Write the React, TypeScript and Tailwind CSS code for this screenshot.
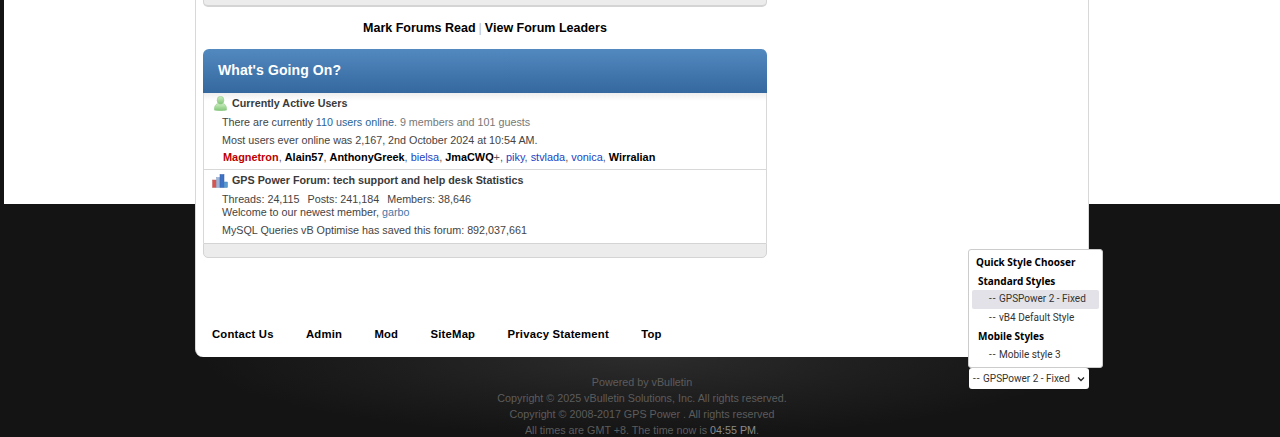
import React from "react";

const UserIcon = () => (
  <svg width="15" height="15" viewBox="0 0 16 16" className="shrink-0">
    <defs>
      <linearGradient id="ug" x1="0" y1="0" x2="0" y2="1">
        <stop offset="0" stopColor="#cdeec0" />
        <stop offset="1" stopColor="#7fc576" />
      </linearGradient>
    </defs>
    <ellipse cx="8" cy="4.5" rx="3.6" ry="4.2" fill="url(#ug)" stroke="#8fc888" strokeWidth="0.6" />
    <path d="M1.5 15 C1.2 10.5 3.5 8.3 5.5 8 C7 9 9 9 10.5 8 C12.5 8.3 14.8 10.5 14.5 15 C11 16 5 16 1.5 15Z" fill="url(#ug)" stroke="#8fc888" strokeWidth="0.6" />
  </svg>
);

const StatsIcon = () => (
  <svg width="16" height="14" viewBox="0 0 16 14" className="shrink-0">
    <rect x="0.5" y="6" width="4" height="7.5" fill="#d9534f" stroke="#b9605c" strokeWidth="0.5" />
    <rect x="4.5" y="3.5" width="3.5" height="10" fill="#9db4d8" stroke="#8aa0c4" strokeWidth="0.5" />
    <rect x="8" y="0.5" width="4" height="13" fill="#3f72c4" stroke="#335fa6" strokeWidth="0.5" />
    <rect x="12" y="8" width="3.5" height="5.5" fill="#5a9ad0" stroke="#4a84b6" strokeWidth="0.5" />
  </svg>
);

const Sep = () => <span className="text-[#555]">, </span>;
const B = ({ c }: { c: string }) => <span className="font-bold text-black">{c}</span>;
const L = ({ c }: { c: string }) => <span className="text-[#1c3fbf]">{c}</span>;
const Dash = () => <span className="tracking-[1px]">--</span>;

const footerLinks = ["Contact Us", "Admin", "Mod", "SiteMap", "Privacy Statement", "Top"];

export default function App() {
  return (
    <div className="relative h-[437px] w-[1280px] overflow-hidden bg-[#141414] font-['Liberation_Sans',Arial,sans-serif]">
      {/* page backdrop */}
      <div className="absolute left-[4px] right-0 top-0 h-[204px] bg-white" />
      <div className="absolute left-[200px] top-[357px] h-[80px] w-[884px] bg-[radial-gradient(ellipse_442px_80px_at_50%_0%,#2c2c2c_0%,#1e1e1e_55%,#141414_100%)]" />

      {/* content column */}
      <div className="relative ml-[195px] flex h-[357px] w-[894px] flex-col rounded-b-[8px] border-x border-[#d8d8d8] bg-white px-[7px]">
        {/* previous block's bottom */}
        <div className="h-[7px] w-[564px] rounded-b-[5px] border-x border-b-2 border-[#d4d4d4] bg-[#ececec]" />

        <div className="mt-[13px] flex h-[16px] w-[564px] items-center justify-center text-[12.5px] font-bold leading-[16px] text-black">
          <span>Mark Forums Read</span>
          <span className="mx-[3px] font-normal text-[#bbb]">|</span>
          <span>View Forum Leaders</span>
        </div>

        {/* What's going on */}
        <div className="mt-[13px] w-[564px]">
          <div className="flex h-[44px] items-center rounded-t-[6px] bg-[linear-gradient(#5289bf,#34689f)] pb-[2px] pl-[15px] text-[14px] font-bold tracking-[0.1px] text-white">
            What's Going On?
          </div>
          <div className="border-x border-[#d8d8d8] text-[10.75px] text-[#444]">
            <div className="h-[77px] border-b border-[#d8d8d8] bg-[linear-gradient(#eeeeee,#ffffff_8px)]">
              <div className="flex h-[18px] items-end gap-[4px] pl-[9px]">
                <UserIcon />
                <span className="text-[10.75px] font-bold leading-[15px] text-[#3a3a3a]">Currently Active Users</span>
              </div>
              <div className="mt-[4px] h-[14px] pl-[18px] leading-[14px]">
                There are currently <span className="text-[#2a6496]">110 users online</span>
                <span className="text-[#777]">. 9 members and 101 guests</span>
              </div>
              <div className="mt-[4px] h-[14px] pl-[18px] leading-[14px]">
                Most users ever online was 2,167, 2nd October 2024 at 10:54 AM.
              </div>
              <div className="mt-[3px] h-[14px] pl-[19px] text-[10.9px] leading-[14px]">
                <span className="font-bold text-[#c00000]">Magnetron</span>
                <Sep />
                <B c="Alain57" />
                <Sep />
                <B c="AnthonyGreek" />
                <Sep />
                <L c="bielsa" />
                <Sep />
                <B c="JmaCWQ" />
                <span className="text-[#555]">+</span>
                <Sep />
                <L c="piky" />
                <Sep />
                <L c="stvlada" />
                <Sep />
                <L c="vonica" />
                <Sep />
                <B c="Wirralian" />
              </div>
            </div>
            <div className="h-[73px]">
              <div className="flex h-[18px] items-end gap-[4px] pl-[8px]">
                <StatsIcon />
                <span className="text-[10.75px] font-bold leading-[15px] text-[#3a3a3a]">
                  GPS Power Forum: tech support and help desk Statistics
                </span>
              </div>
              <div className="mt-[4px] flex h-[14px] gap-[8px] pl-[18px] leading-[14px]">
                <span>Threads: 24,115</span>
                <span>Posts: 241,184</span>
                <span>Members: 38,646</span>
              </div>
              <div className="h-[13px] pl-[18px] leading-[13px]">
                Welcome to our newest member, <span className="text-[#3f79a8]">garbo</span>
              </div>
              <div className="mt-[4px] h-[14px] pl-[18px] leading-[14px]">
                MySQL Queries vB Optimise has saved this forum: 892,037,661
              </div>
            </div>
          </div>
          <div className="h-[15px] rounded-b-[5px] border border-[#d4d4d4] bg-[#ececec]" />
        </div>

        {/* footer links */}
        <div className="mt-[69px] flex gap-[32.3px] pl-[9px] text-[11.3px] font-bold leading-[14px] tracking-[0.2px] text-black">
          {footerLinks.map((t) => (
            <span key={t}>{t}</span>
          ))}
        </div>
      </div>

      {/* copyright */}
      <div className="relative ml-[4px] mt-[17px] text-center text-[10.75px] leading-[16px] text-[#5c5c5c]">
        <div>Powered by vBulletin</div>
        <div>Copyright © 2025 vBulletin Solutions, Inc. All rights reserved.</div>
        <div>Copyright © 2008-2017 GPS Power . All rights reserved</div>
        <div>
          All times are GMT +8. The time now is <span className="text-[#8a8a8a]">04:55 PM</span>.
        </div>
      </div>

      {/* style chooser overlay */}
      <div className="absolute left-[968px] top-[249px] h-[119px] w-[135px] rounded-[3px] border border-[#ccc] bg-white px-[3px] font-['Roboto','Noto_Sans',sans-serif] text-[10px] leading-[18.6px] text-[#333]">
        <div className="pl-[4px] pt-[3px] font-['Noto_Sans',sans-serif] text-[10px] font-bold text-black">Quick Style Chooser</div>
        <div className="pl-[6px] font-['Noto_Sans',sans-serif] text-[10px] font-bold text-black">Standard Styles</div>
        <div className="rounded-[2px] bg-[#e2e2e8] pl-[17px]"><Dash /> GPSPower 2 - Fixed</div>
        <div className="pl-[17px]"><Dash /> vB4 Default Style</div>
        <div className="pl-[6px] font-['Noto_Sans',sans-serif] text-[10px] font-bold text-black">Mobile Styles</div>
        <div className="pl-[17px]"><Dash /> Mobile style 3</div>
      </div>
      <div className="absolute left-[969px] top-[368px] flex h-[21px] w-[120px] items-center justify-between whitespace-nowrap rounded-[3px] bg-white pl-[4px] pr-[4px] font-['Roboto','Noto_Sans',sans-serif] text-[10px] text-[#333]">
        <span><Dash /> GPSPower 2 - Fixed</span>
        <svg width="8" height="6" viewBox="0 0 8 6">
          <path d="M1 1.5 L4 4.5 L7 1.5" fill="none" stroke="#222" strokeWidth="1.3" />
        </svg>
      </div>
    </div>
  );
}
